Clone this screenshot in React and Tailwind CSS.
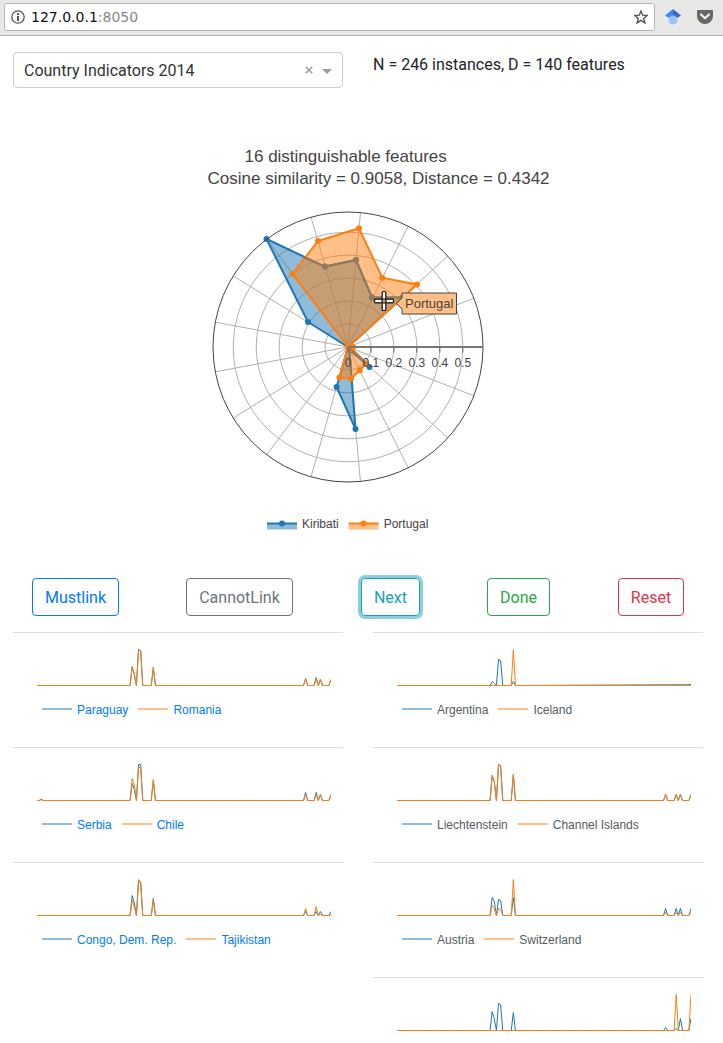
import React from "react";

const BLUE = "#1f77b4";
const ORANGE = "#ff7f0e";
const CX = 348;
const CY = 207;
const FEATURES = 140;
const STEP = 294 / (FEATURES - 1);

// Non-zero feature values, keyed by feature index.
const pairs = {
  must: [
    { a: "Paraguay", b: "Romania",
      va: { 45: 19, 46: 11, 48: 36, 49: 35, 55: 18, 127: 7, 132: 8, 134: 6, 139: 6 },
      vb: { 45: 18, 46: 12, 48: 35, 49: 35, 55: 18, 127: 7, 132: 7, 134: 6, 139: 6 } },
    { a: "Serbia", b: "Chile",
      va: { 2: 1, 45: 17, 46: 11, 48: 36, 49: 36, 55: 20, 127: 8, 132: 8, 134: 6, 139: 6 },
      vb: { 2: 1.5, 45: 22, 46: 16, 48: 33, 49: 33, 55: 21, 127: 6, 132: 6, 134: 6, 139: 6 } },
    { a: "Congo, Dem. Rep.", b: "Tajikistan",
      va: { 45: 20, 46: 13, 48: 34, 49: 33, 55: 17, 127: 4, 132: 4, 134: 4, 139: 4 },
      vb: { 45: 15, 46: 9, 48: 36, 49: 34, 55: 15, 127: 7, 132: 9, 134: 1, 139: 1 } },
  ],
  cannot: [
    { a: "Argentina", b: "Iceland",
      va: { 45: 4, 46: 2, 48: 26, 49: 25, 55: 4 }, vb: { 55: 36 }, ramp: true },
    { a: "Liechtenstein", b: "Channel Islands",
      va: { 45: 25, 46: 19, 48: 36, 49: 35, 55: 26, 127: 6, 132: 6, 134: 6, 139: 6 },
      vb: { 45: 25, 46: 19, 48: 36, 49: 34, 55: 26, 127: 6, 132: 6, 134: 6, 139: 6 } },
    { a: "Austria", b: "Switzerland",
      va: { 45: 18, 46: 14, 48: 16, 49: 15, 55: 18, 127: 7, 132: 7, 134: 7, 139: 7 },
      vb: { 45: 10, 46: 7, 48: 7, 49: 6, 55: 36, 127: 3, 132: 3, 134: 3, 139: 3 } },
    { a: "", b: "",
      va: { 45: 19, 46: 12, 48: 27, 49: 26, 55: 18, 127: 3, 132: 2, 134: 12, 139: 12 },
      vb: { 132: 36, 139: 36 } },
  ],
};

function series(values, ramp) {
  return Array.from({ length: FEATURES }, (_, i) => {
    const lift = ramp && i > 56 ? (0.8 * (i - 56)) / 83 : 0;
    return `${(24 + i * STEP).toFixed(2)},${(52.5 - (values[i] || 0) - lift).toFixed(2)}`;
  }).join(" ");
}

function PairRow({ pair, textClass }) {
  return (
    <div className="h-[115px] w-[330px] border-t border-[#dcdee1]">
      <svg width="318" height="62" className="block">
        <g fill="none" strokeWidth="1">
          <polyline points={series(pair.va, pair.ramp)} stroke={BLUE} />
          <polyline points={series(pair.vb)} stroke={ORANGE} />
        </g>
      </svg>
      {pair.a && (
        <div className={"flex h-[30px] items-center gap-[10px] pl-[29px] font-['Liberation_Sans',sans-serif] text-[12px] " + textClass}>
          <span className="flex items-center gap-[5px]">
            <span className="mb-[2px] h-[2px] w-[30px] bg-[#8fbbda]" />{pair.a}
          </span>
          <span className="flex items-center gap-[5px]">
            <span className="mb-[2px] h-[2px] w-[30px] bg-[#ffbf87]" />{pair.b}
          </span>
        </div>
      )}
    </div>
  );
}

function Trace({ points, color }) {
  return (
    <g>
      <polygon points={points.map((p) => p.join(",")).join(" ")} fill={color} fillOpacity="0.5" stroke="none" />
      <polygon points={points.map((p) => p.join(",")).join(" ")} fill="none" stroke={color} strokeWidth="2" strokeLinejoin="round" />
      {points.map(([x, y], i) => <circle key={i} cx={x} cy={y} r="3" fill={color} />)}
    </g>
  );
}

const kiribati = [
  [348, 207], [402.5, 157.5], [372, 157.5], [356, 120], [325, 126.6], [266.5, 99], [308, 182],
  [348, 207], [348, 207], [336.6, 247], [355.5, 289], [349.5, 210], [369.5, 227], [351, 208],
];
const portugal = [
  [353, 207], [348, 207], [417, 144.4], [382.3, 137.8], [359, 88.3], [318, 101], [292.5, 133.8],
  [348, 207], [348, 207], [339.4, 237.5], [351, 238.5], [359.7, 230.4], [366, 223.5], [352, 209],
];

function Radar() {
  return (
    <svg width="723" height="400" className="block font-['Liberation_Sans',sans-serif]">
      <g fill="none" stroke="#b0b0b0" strokeWidth="1">
        {[1, 2, 3, 4, 5].map((n) => <circle key={n} cx={CX} cy={CY} r={n * 22.95} />)}
        {Array.from({ length: 16 }, (_, i) => {
          const t = ((i + 1) * 2 * Math.PI) / 17;
          return <line key={i} x1={CX} y1={CY} x2={CX + 135 * Math.cos(t)} y2={CY - 135 * Math.sin(t)} />;
        })}
      </g>
      <Trace points={kiribati} color={BLUE} />
      <Trace points={portugal} color={ORANGE} />
      <polyline points="402,157.5 372,157.5 356,120 325,126.6 303,117" fill="none" stroke="#8f7b63" strokeWidth="2" />
      {[[372, 157.5], [356, 120], [325, 126.6]].map(([x, y]) => <circle key={x} cx={x} cy={y} r="3" fill="#8f7b63" />)}
      <path d="M350 209l17 15M349 208l2 25" stroke="#8f7b63" strokeWidth="1.500" />
      <circle cx={CX} cy={CY} r="135" fill="none" stroke="#444" strokeWidth="1" />
      <path d="M348 207H483" stroke="#777" strokeWidth="2" />
      <g fill="#444" fontSize="12" textAnchor="middle">
        {["0", "0.1", "0.2", "0.3", "0.4", "0.5"].map((label, i) => (
          <g key={label}>
            <path d={`M${348 + i * 22.95} 207v5.500`} stroke="#666" />
            <text x={348 + i * 22.95} y="227">{label}</text>
          </g>
        ))}
      </g>
      <path d="M396.500 163.500l5.500-5.500v-5h54.500v21h-54.500v-5z" fill="#ffbf87" stroke="#444" />
      <text x="405" y="168" fontSize="13" fill="#444">Portugal</text>
      <g fill="#fff" stroke="#111" strokeWidth="1.200">
        <rect x="382.200" y="151.500" width="3.600" height="7.500" rx="1" />
        <rect x="382.200" y="163" width="3.600" height="7.500" rx="1" />
        <rect x="374.500" y="159.200" width="7.500" height="3.600" rx="1" />
        <rect x="386" y="159.200" width="7.500" height="3.600" rx="1" />
      </g>
      <path d="M267 383h30v6.500h-30z" fill="#8fbbda" />
      <path d="M267 383.500h30" stroke={BLUE} strokeWidth="2" />
      <circle cx="282" cy="383.500" r="3" fill={BLUE} />
      <text x="302" y="388" fontSize="12" fill="#444">Kiribati</text>
      <path d="M348.600 383h30v6.500h-30z" fill="#ffbf87" />
      <path d="M348.600 383.500h30" stroke={ORANGE} strokeWidth="2" />
      <circle cx="363.600" cy="383.500" r="3" fill={ORANGE} />
      <text x="383.700" y="388" fontSize="12" fill="#444">Portugal</text>
    </svg>
  );
}

function BrowserBar() {
  return (
    <div className="flex h-[36px] shrink-0 items-start border-b border-[#b1b1ae] bg-[#e8e8e7] pl-1 pt-[3px]">
      <div className="flex h-[28px] w-[651px] items-center rounded-[3px] border border-[#b6b6b3] bg-white pl-[6px] pr-[6px] font-['DejaVu_Sans',sans-serif] text-[14px]">
        <svg width="14" height="14" viewBox="0 0 14 14" className="mr-[6px]">
          <circle cx="7" cy="7" r="6.200" fill="none" stroke="#555" strokeWidth="1.300" />
          <path d="M7 3v2M7 6v5" stroke="#555" strokeWidth="2" />
        </svg>
        <span className="text-[#111]">127.0.0.1</span>
        <span className="text-[#888]">:8050</span>
        <svg width="14" height="14" viewBox="0 0 14 14" className="ml-auto">
          <path d="M7 1l1.700 4.200 4.500.3-3.500 2.900 1.200 4.500L7 10.400l-3.900 2.500 1.200-4.500L.8 5.500l4.500-.3z" fill="none" stroke="#555" strokeWidth="1.400" />
        </svg>
      </div>
      <svg width="16" height="16" viewBox="0 0 16 16" className="ml-[10px] mt-[6px]">
        <path d="M8 0L0 6.500l4 2.500h4z" fill="#4285f4" />
        <path d="M8 0l8 6.500-4 2.500H8z" fill="#356ac3" />
        <circle cx="8" cy="11" r="4.500" fill="#a0c3ff" />
        <path d="M3.700 9.500a4.600 4.600 0 0 1 8.600 0L11.500 8 8 6.500 4.500 8z" fill="#76a7fa" />
      </svg>
      <svg width="16" height="14" viewBox="0 0 16 14" className="ml-4 mt-[7px]">
        <path d="M1 0h14a1 1 0 0 1 1 1v5a8 8 0 0 1-16 0V1a1 1 0 0 1 1-1z" fill="#666" />
        <path d="M4 4.500l4 3.800 4-3.800" fill="none" stroke="#f0f0f0" strokeWidth="2.200" strokeLinecap="round" strokeLinejoin="round" />
      </svg>
    </div>
  );
}

const btn = "h-[38px] rounded-[4px] border pt-px text-[16px] leading-[35px] ";

export default function App() {
  return (
    <div className="flex h-[1043px] w-[723px] flex-col overflow-hidden bg-white font-[Roboto,sans-serif] text-[16px] text-[#212529]">
      <BrowserBar />
      <div className="flex h-[104px] shrink-0 items-start pl-[13px] pt-4">
        <div className="flex h-[36px] w-[330px] items-center rounded-[4px] border border-[#ccc] pl-[10px] pr-[10px] text-[#333]">
          <span className="pt-[2px]">Country Indicators 2014</span>
          <svg width="8" height="8" className="ml-auto"><path d="M.7.700l6.600 6.600M7.300.700L.7 7.300" stroke="#999" strokeWidth="1.400" /></svg>
          <svg width="10" height="5" className="ml-[9px] mt-[2px]"><path d="M0 0h10L5 5z" fill="#999" /></svg>
        </div>
        <p className="ml-[30px] mt-px">N = 246 instances, D = 140 features</p>
      </div>
      <div className="grid h-[438px] shrink-0">
        <div className="z-10 col-start-1 row-start-1 font-['Liberation_Sans',sans-serif] text-[17px] leading-[22px] text-[#444]">
          <p className="pl-[244.500px] pt-[6px]">16 distinguishable features</p>
          <p className="pl-[207.500px]">Cosine similarity = 0.9058, Distance = 0.4342</p>
        </div>
        <div className="col-start-1 row-start-1"><Radar /></div>
      </div>
      <div className="ml-8 flex shrink-0">
        <button className={btn + "w-[87px] border-[#007bff] text-[#007bff]"}>Mustlink</button>
        <button className={btn + "ml-[67px] w-[107px] border-[#6c757d] text-[#6c757d]"}>CannotLink</button>
        <button className={btn + "ml-[68px] w-[59px] border-[#17a2b8] text-[#17a2b8] shadow-[0_0_0_3px_rgba(23,162,184,0.5)]"}>Next</button>
        <button className={btn + "ml-[67px] w-[63px] border-[#28a745] text-[#28a745]"}>Done</button>
        <button className={btn + "ml-[68px] w-[66px] border-[#dc3545] text-[#dc3545]"}>Reset</button>
      </div>
      <div className="flex gap-[30px] pl-[13px] pt-4">
        <div className="flex flex-col">
          {pairs.must.map((p) => <PairRow key={p.a} pair={p} textClass="text-[#007bff]" />)}
        </div>
        <div className="flex flex-col">
          {pairs.cannot.map((p) => <PairRow key={p.a} pair={p} textClass="text-[#555b61]" />)}
        </div>
      </div>
    </div>
  );
}
